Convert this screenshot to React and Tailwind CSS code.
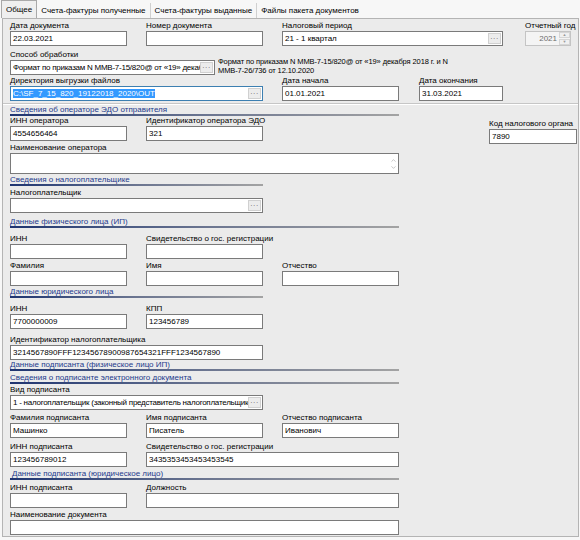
import { ChevronUp, ChevronDown } from "lucide-react";

const font = { fontFamily: '"Liberation Sans", Arial, sans-serif' };

function Label({ children, className = "" }) {
    return <div className={"h-[10px] leading-[10px] text-[8px] text-black whitespace-nowrap " + className}>{children}</div>;
}

function Dots() {
    return (
        <div className="h-[11px] w-[13px] mr-[1px] shrink-0 bg-[#ececec] border border-[#d0d0d0] flex items-center justify-center text-[7px] leading-none text-[#555] tracking-[0.5px]">
            ···
        </div>
    );
}

function Box({ value, btn, className = "", focus, tight }) {
    return (
        <div
            className={
                "h-[15px] bg-white border flex items-center overflow-hidden " +
                (focus ? "border-[#3c7fb1] " : "border-[#7a7a7a] ") +
                className
            }
        >
            <div
                className={
                    "flex-1 min-w-0 pl-[2px] text-[8px] leading-[10px] whitespace-nowrap overflow-hidden text-black " +
                    (tight ? "tracking-[-0.25px]" : "")
                }
            >
                {focus ? <span className="bg-[#3399ff] text-white">{value}</span> : value}
            </div>
            {btn && <Dots />}
        </div>
    );
}

function Field({ label, value, btn, w, className = "", focus, tight }) {
    return (
        <div className={"shrink-0 " + w + " " + className}>
            <Label>{label}</Label>
            <Box value={value} btn={btn} focus={focus} tight={tight} />
        </div>
    );
}

function Header({ children, w, className = "" }) {
    return (
        <div className={"ml-[7px] " + w + " " + className}>
            <div className="h-[9px] leading-[9px] text-[8px] text-[#1d3a8c] whitespace-nowrap">{children}</div>
            <div className="h-[2px] bg-gradient-to-r from-[#1f3470] via-[#6b7590] to-[#a3a3a3]"></div>
        </div>
    );
}

export default function App() {
    return (
        <div className="w-[580px] h-[540px] bg-[#f7f7f7] overflow-hidden" style={font}>
            {/* Tabs */}
            <div className="h-[18px] flex items-end pl-[1px] text-[8px] text-black">
                <div className="h-[18px] px-[4px] flex items-center bg-[#efefef] border border-b-0 border-[#a9a9a9]">Общее</div>
                <div className="h-[15px] px-[4px] flex items-center border-r border-[#d0d0d0]">Счета-фактуры полученные</div>
                <div className="h-[15px] px-[4px] flex items-center border-r border-[#d0d0d0]">Счета-фактуры выданные</div>
                <div className="h-[15px] px-[4px] flex items-center">Файлы пакета документов</div>
            </div>

            {/* Panel */}
            <div className="ml-[2px] w-[577px] bg-[#ebebeb] border border-[#b4b4b4] pb-[1px]">
                {/* Row A */}
                <div className="flex mt-[2px] pl-[7px]">
                    <Field w="w-[117px]" label="Дата документа" value="22.03.2021" />
                    <Field w="w-[117px]" className="ml-[19px]" label="Номер документа" value="" />
                    <Field w="w-[221px]" className="ml-[19px]" label="Налоговый период" value="21 - 1 квартал" btn />
                    <div className="ml-[22px] w-[46px] shrink-0">
                        <Label>Отчетный год</Label>
                        <div className="h-[15px] bg-[#f4f4f4] border border-[#c4c4c4] flex items-center">
                            <div className="flex-1 text-right pr-[2px] text-[8px] leading-[10px] text-[#6d6d6d]">2021</div>
                            <div className="w-[11px] h-[13px] flex flex-col gap-[1px]">
                                <div className="flex-1 bg-[#f0f0f0] border border-[#d6d6d6] flex items-center justify-center text-[4px] leading-none text-[#9a9a9a]">▲</div>
                                <div className="flex-1 bg-[#f0f0f0] border border-[#d6d6d6] flex items-center justify-center text-[4px] leading-none text-[#9a9a9a]">▼</div>
                            </div>
                        </div>
                    </div>
                </div>

                {/* Row B */}
                <div className="flex mt-[4px] pl-[7px]">
                    <Field w="w-[205px]" tight label="Способ обработки" value="Формат по приказам N ММВ-7-15/820@ от «19» декабря 2018 г." btn />
                    <div className="ml-[3px] mt-[7px] text-[7.5px] leading-[9px] tracking-[-0.1px] text-black whitespace-nowrap">
                        Формат по приказам N ММВ-7-15/820@ от «19» декабря 2018 г. и N
                        <br />
                        ММВ-7-26/736 от 12.10.2020
                    </div>
                </div>

                {/* Row C */}
                <div className="flex mt-[1px] pl-[7px]">
                    <Field w="w-[253px]" label="Директория выгрузки файлов" value="C:\SF_7_15_820_19122018_2020\OUT" btn focus />
                    <Field w="w-[117px]" className="ml-[19px]" label="Дата начала" value="01.01.2021" />
                    <Field w="w-[84px]" className="ml-[20px]" label="Дата окончания" value="31.03.2021" />
                </div>

                <div className="mt-[2px] h-[2px] border-t border-[#c6c6c6] border-b border-b-white"></div>

                <Header w="w-[389px]">Сведения об операторе ЭДО отправителя</Header>

                {/* Row D */}
                <div className="flex pl-[7px]">
                    <Field w="w-[117px]" label="ИНН оператора" value="4554656464" />
                    <Field w="w-[117px]" className="ml-[19px]" label="Идентификатор оператора ЭДО" value="321" />
                    <Field w="w-[88px]" className="ml-[226px] mt-[3px]" label="Код налогового органа" value="7890" />
                </div>

                {/* Row E */}
                <div className="mt-[-1px] pl-[7px] w-[396px]">
                    <Label>Наименование оператора</Label>
                    <div className="h-[21px] bg-white border border-[#7a7a7a] flex justify-end">
                        <div className="w-[10px] flex flex-col items-center justify-center text-[#a0a0a0]">
                            <ChevronUp size={7} strokeWidth={2} />
                            <ChevronDown size={7} strokeWidth={2} />
                        </div>
                    </div>
                </div>

                <Header w="w-[253px]" className="mt-[1px]">Сведения о налогоплательщике</Header>

                {/* Row F */}
                <div className="flex mt-[2px] pl-[7px]">
                    <Field w="w-[253px]" label="Налогоплательщик" value="" btn />
                </div>

                <Header w="w-[389px]" className="mt-[4px]">Данные физического лица (ИП)</Header>

                {/* Row G */}
                <div className="flex mt-[6px] pl-[7px]">
                    <Field w="w-[117px]" label="ИНН" value="" />
                    <Field w="w-[117px]" className="ml-[19px]" label="Свидетельство о гос. регистрации" value="" />
                </div>

                {/* Row H */}
                <div className="flex mt-[2px] pl-[7px]">
                    <Field w="w-[117px]" label="Фамилия" value="" />
                    <Field w="w-[117px]" className="ml-[19px]" label="Имя" value="" />
                    <Field w="w-[117px]" className="ml-[19px]" label="Отчество" value="" />
                </div>

                <Header w="w-[253px]" className="mt-[1px]">Данные юридического лица</Header>

                {/* Row I */}
                <div className="flex mt-[6px] pl-[7px]">
                    <Field w="w-[117px]" label="ИНН" value="7700000009" />
                    <Field w="w-[117px]" className="ml-[19px]" label="КПП" value="123456789" />
                </div>

                {/* Row J */}
                <div className="flex mt-[6px] pl-[7px]">
                    <Field w="w-[253px]" label="Идентификатор налогоплательщика" value="3214567890FFF12345678900987654321FFF1234567890" />
                </div>

                <Header w="w-[389px]">Данные подписанта (физическое лицо ИП)</Header>
                <Header w="w-[389px]" className="mt-[2px]">Сведения о подписанте электронного документа</Header>

                {/* Row K */}
                <div className="flex mt-[1px] pl-[7px]">
                    <Field w="w-[253px]" tight label="Вид подписанта" value="1 - налогоплательщик (законный представитель налогоплательщика)" btn />
                </div>

                {/* Row L */}
                <div className="flex mt-[3px] pl-[7px]">
                    <Field w="w-[117px]" label="Фамилия подписанта" value="Машинко" />
                    <Field w="w-[117px]" className="ml-[19px]" label="Имя подписанта" value="Писатель" />
                    <Field w="w-[117px]" className="ml-[19px]" label="Отчество подписанта" value="Иванович" />
                </div>

                {/* Row M */}
                <div className="flex mt-[4px] pl-[7px]">
                    <Field w="w-[117px]" label="ИНН подписанта" value="123456789012" />
                    <Field w="w-[253px]" className="ml-[19px]" label="Свидетельство о гос.  регистрации" value="3435353453453453545" />
                </div>

                <Header w="w-[389px]" className="mt-[2px] [&>div:first-child]:pl-[2px]">Данные подписанта (юридическое лицо)</Header>

                {/* Row N */}
                <div className="flex mt-[3px] pl-[7px]">
                    <Field w="w-[117px]" label="ИНН подписанта" value="" />
                    <Field w="w-[253px]" className="ml-[19px]" label="Должность" value="" />
                </div>

                {/* Row O */}
                <div className="flex mt-[2px] pl-[7px]">
                    <Field w="w-[389px]" label="Наименование документа" value="" />
                </div>
            </div>
        </div>
    );
}
